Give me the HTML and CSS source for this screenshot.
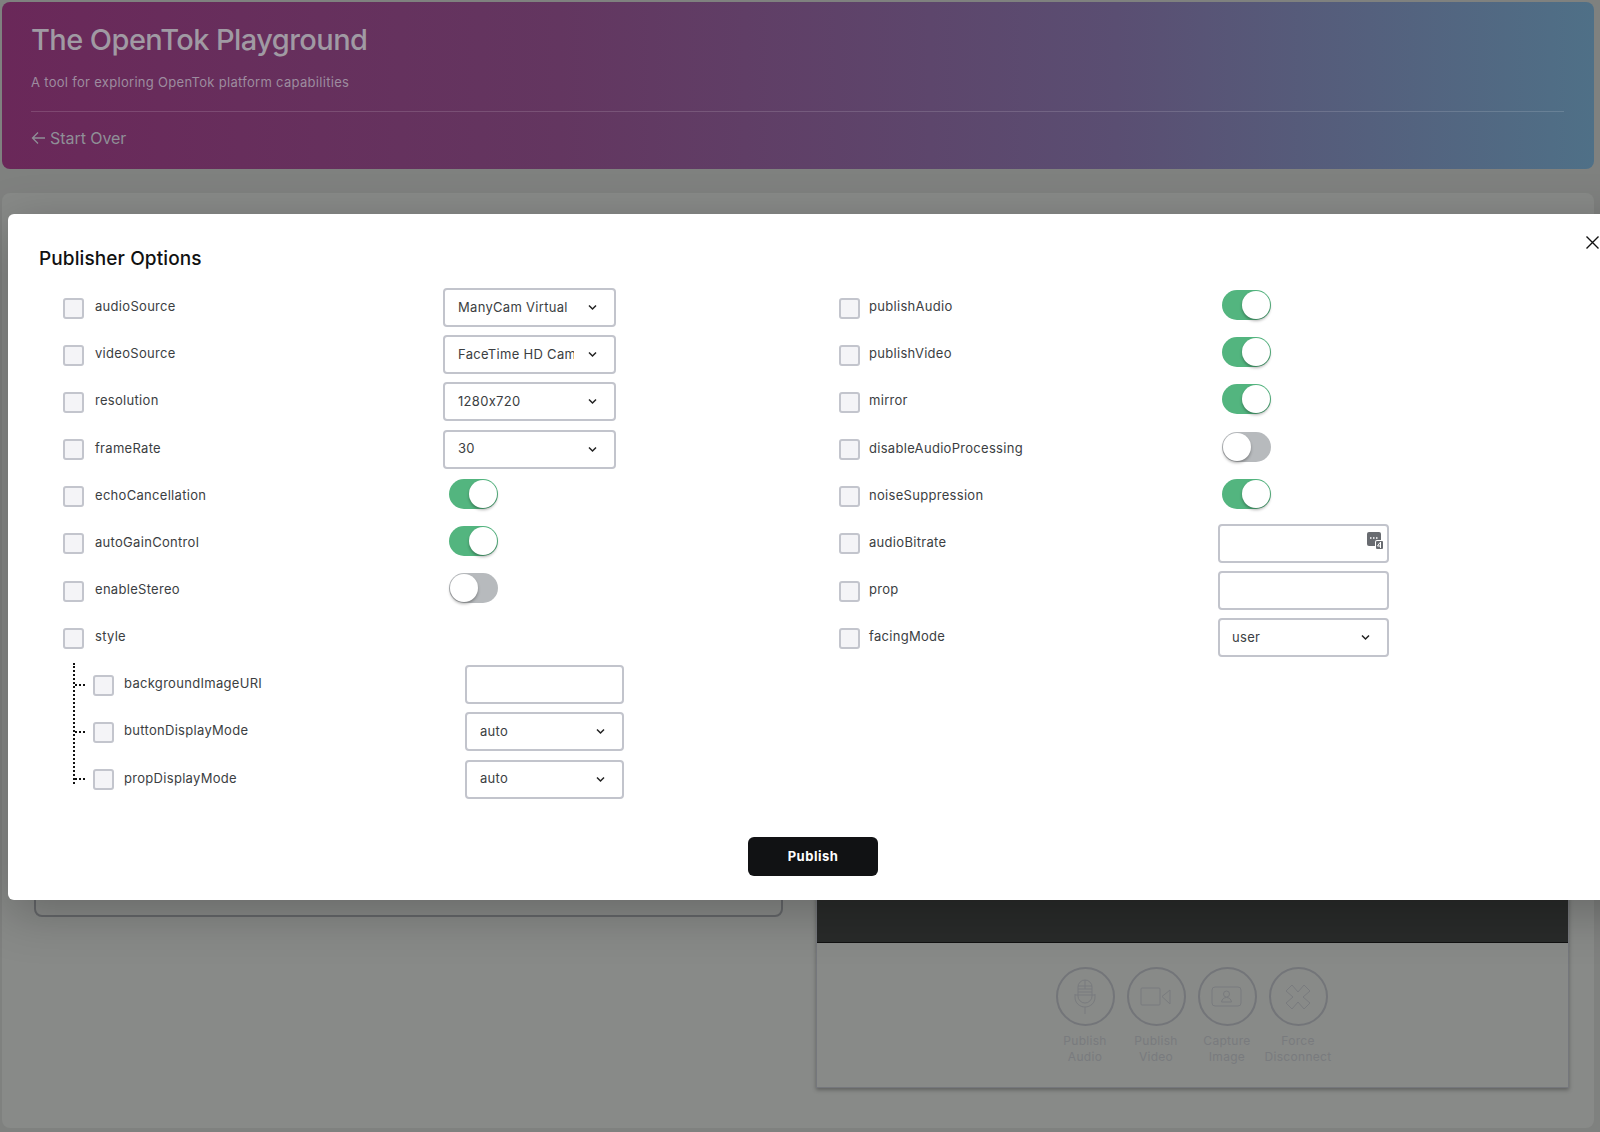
FILE: index.html
```html
<!DOCTYPE html>
<html lang="en">
<head>
  <meta charset="UTF-8" />
  <meta name="viewport" content="width=device-width, initial-scale=1.0" />
  <title>The OpenTok Playground</title>
  <link rel="stylesheet" href="styles.css">
</head>
<body>
  <header class="site-header">
    <h1>The OpenTok Playground</h1>
    <p>A tool for exploring OpenTok platform capabilities</p>
    <hr />
    <a class="start-over" href="#">
      <svg width="15" height="14" viewBox="0 0 15 14" fill="none" stroke="currentColor" stroke-width="1.3"><path d="M14 7H1.5M7 1.5 1.5 7 7 12.5" /></svg>
      Start Over
    </a>
  </header>

  <main class="card">
    <div class="session-box"></div>
    <div class="video-panel">
      <div class="video-feed"></div>
      <div class="video-controls">
        <div class="control">
          <span class="control-icon">
            <svg width="34" height="36" viewBox="0 0 34 36" fill="none" stroke="currentColor" stroke-width="1">
              <rect x="10" y="1" width="14" height="23" rx="7" />
              <path d="M10 7h14M10 10h14M10 13h14M10 16h14M17 1v9" />
              <path d="M7 15v3c0 6 4.500 10 10 10s10-4 10-10v-3M7 16h3M24 16h3M17 28v7" />
            </svg>
          </span>
          <span>Publish Audio</span>
        </div>
        <div class="control">
          <span class="control-icon">
            <svg width="32" height="20" viewBox="0 0 32 20" fill="none" stroke="currentColor" stroke-width="1">
              <rect x="1" y="1" width="19" height="17" rx="1" />
              <path d="M22 9.500 30 3v14z" />
            </svg>
          </span>
          <span>Publish Video</span>
        </div>
        <div class="control">
          <span class="control-icon">
            <svg width="32" height="22" viewBox="0 0 32 22" fill="none" stroke="currentColor" stroke-width="1">
              <rect x="1" y="1" width="29" height="19" rx="3" />
              <circle cx="15.500" cy="8" r="3" />
              <path d="M10.500 16c.5-3 2.500-4.500 5-4.500s4.500 1.500 5 4.500z" />
            </svg>
          </span>
          <span>Capture Image</span>
        </div>
        <div class="control">
          <span class="control-icon">
            <svg width="26" height="26" viewBox="0 0 26 26" fill="none" stroke="currentColor" stroke-width="1">
              <path d="M7 1 13 8 19 1 25 7 18 13 25 19 19 25 13 18 7 25 1 19 8 13 1 7z" />
            </svg>
          </span>
          <span>Force Disconnect</span>
        </div>
      </div>
    </div>
  </main>

  <section class="modal">
    <button class="modal-close" aria-label="Close">
      <svg width="13" height="13" viewBox="0 0 13 13" fill="none" stroke="#111" stroke-width="1.4"><path d="M.5.5l12 12M12.500.5l-12 12" /></svg>
    </button>
    <h2>Publisher Options</h2>

    <div class="options">
      <div class="option-col col-left">
        <div class="row">
          <input type="checkbox" class="check" />
          <label>audioSource</label>
          <select class="select"><option>ManyCam Virtual</option></select>
        </div>
        <div class="row">
          <input type="checkbox" class="check" />
          <label>videoSource</label>
          <select class="select"><option>FaceTime HD Camera</option></select>
        </div>
        <div class="row">
          <input type="checkbox" class="check" />
          <label>resolution</label>
          <select class="select"><option>1280x720</option></select>
        </div>
        <div class="row">
          <input type="checkbox" class="check" />
          <label>frameRate</label>
          <select class="select"><option>30</option></select>
        </div>
        <div class="row">
          <input type="checkbox" class="check" />
          <label>echoCancellation</label>
          <span class="toggle on"></span>
        </div>
        <div class="row">
          <input type="checkbox" class="check" />
          <label>autoGainControl</label>
          <span class="toggle on"></span>
        </div>
        <div class="row">
          <input type="checkbox" class="check" />
          <label>enableStereo</label>
          <span class="toggle"></span>
        </div>
        <div class="row">
          <input type="checkbox" class="check" />
          <label>style</label>
        </div>
        <div class="sub-group">
          <div class="tree-line"></div>
          <div class="sub-rows">
            <div class="row sub-row">
              <span class="tree-dash"></span>
              <input type="checkbox" class="check" />
              <label>backgroundImageURI</label>
              <input type="text" class="text-input" />
            </div>
            <div class="row sub-row">
              <span class="tree-dash"></span>
              <input type="checkbox" class="check" />
              <label>buttonDisplayMode</label>
              <select class="select"><option>auto</option></select>
            </div>
            <div class="row sub-row">
              <span class="tree-dash"></span>
              <input type="checkbox" class="check" />
              <label>propDisplayMode</label>
              <select class="select"><option>auto</option></select>
            </div>
          </div>
        </div>
      </div>

      <div class="option-col col-right">
        <div class="row">
          <input type="checkbox" class="check" />
          <label>publishAudio</label>
          <span class="toggle on"></span>
        </div>
        <div class="row">
          <input type="checkbox" class="check" />
          <label>publishVideo</label>
          <span class="toggle on"></span>
        </div>
        <div class="row">
          <input type="checkbox" class="check" />
          <label>mirror</label>
          <span class="toggle on"></span>
        </div>
        <div class="row">
          <input type="checkbox" class="check" />
          <label>disableAudioProcessing</label>
          <span class="toggle"></span>
        </div>
        <div class="row">
          <input type="checkbox" class="check" />
          <label>noiseSuppression</label>
          <span class="toggle on"></span>
        </div>
        <div class="row">
          <input type="checkbox" class="check" />
          <label>audioBitrate</label>
          <span class="input-wrap">
            <input type="text" class="text-input" />
            <svg class="input-badge" width="17" height="19" viewBox="0 0 17 19">
              <rect x="0" y="1" width="14" height="14" rx="2" fill="#686b70" />
              <path d="M3 7h1.500M6 7h1.500M9 7h1.500" stroke="#fff" stroke-width="1.600" />
              <rect x="8" y="9" width="9" height="10" rx="2" fill="#fff" />
              <rect x="9" y="10" width="7" height="8" rx="1" fill="#686b70" />
              <path d="M13.500 11v6M13.500 15H10.500l2.500-3.500" stroke="#fff" stroke-width="1" fill="none" />
            </svg>
          </span>
        </div>
        <div class="row">
          <input type="checkbox" class="check" />
          <label>prop</label>
          <input type="text" class="text-input" />
        </div>
        <div class="row">
          <input type="checkbox" class="check" />
          <label>facingMode</label>
          <select class="select"><option>user</option></select>
        </div>
      </div>
    </div>

    <div class="modal-footer">
      <button class="publish-btn">Publish</button>
    </div>
  </section>
</body>
</html>
```

FILE: styles.css
```css
/* page colours are the dimmed ones, as seen behind the modal backdrop */
body {
  margin: 0;
  padding: 2px 6px 4px 2px;
  height: 1132px;
  box-sizing: border-box;
  overflow: hidden;
  position: relative;
  background: #7f817f;
  font-family: Inter, "Liberation Sans", sans-serif;
}

.site-header {
  height: 167px;
  box-sizing: border-box;
  padding: 20px 30px 0 29px;
  border-radius: 8px;
  background: linear-gradient(90deg, #6a2859 0%, #633660 35%, #5a4e72 70%, #4f7087 100%);
  color: #a09aa3;
}
.site-header h1 {
  margin: 0;
  font-size: 29px;
  line-height: 36px;
  font-weight: 500;
  letter-spacing: -0.57px;
}
.site-header p {
  margin: 15px 0 0;
  font-size: 13px;
  line-height: 18px;
  letter-spacing: 0.3px;
  color: #9d8c9f;
}
.site-header hr {
  margin: 20px 0 0;
  border: 0;
  height: 1px;
  background: rgba(255, 255, 255, 0.14);
}
.start-over {
  display: flex;
  align-items: center;
  gap: 4px;
  margin-top: 16px;
  font-size: 16px;
  line-height: 20px;
  letter-spacing: -0.05px;
  color: #8f8f97;
  text-decoration: none;
}

.card {
  display: flex;
  justify-content: space-between;
  align-items: flex-start;
  height: 935px;
  margin-top: 24px;
  box-sizing: border-box;
  padding: 32px 25px 0 32px;
  border-radius: 8px;
  background: #888a88;
}
.session-box {
  width: 749px;
  height: 692px;
  box-sizing: border-box;
  border: 2px solid #65676a;
  border-radius: 8px;
}
.video-panel {
  width: 753px;
  border: 1px solid #75777c;
  border-top: 0;
  box-shadow: 0 2px 4px rgba(0, 0, 0, 0.3);
  box-sizing: border-box;
}
.video-feed {
  height: 717px;
  background: #292b2a;
  border-bottom: 1px solid #111;
}
.video-controls {
  height: 144px;
  box-sizing: border-box;
  padding: 24px 2px 0 0;
  display: flex;
  justify-content: center;
  gap: 12px;
  color: #737579;
}
.control {
  width: 59px;
  display: flex;
  flex-direction: column;
  align-items: center;
  gap: 7px;
  font-size: 12px;
  line-height: 16px;
  letter-spacing: 0.3px;
  text-align: center;
  color: #797b7e;
}
.control-icon {
  width: 59px;
  height: 59px;
  box-sizing: border-box;
  border: 2px solid #737579;
  border-radius: 50%;
  display: flex;
  align-items: center;
  justify-content: center;
  flex: none;
}

/* the modal runs past the right edge of the window */
.modal {
  position: absolute;
  left: 8px;
  top: 214px;
  width: 1640px;
  height: 686px;
  box-sizing: border-box;
  padding: 31px 0 0 31px;
  background: #fff;
  border-radius: 6px;
  box-shadow: 0 12px 50px rgba(0, 0, 0, 0.25);
}
.modal h2 {
  margin: 0;
  font-size: 19px;
  line-height: 28px;
  font-weight: 500;
  letter-spacing: 0.1px;
  color: #111;
}
.modal-close {
  position: absolute;
  left: 1578px;
  top: 22px;
  padding: 0;
  border: 0;
  background: none;
  line-height: 0;
}

.options {
  display: flex;
  margin-top: 11px;
  padding-left: 24px;
}
.option-col {
  width: 776px;
  flex: none;
}

.row {
  display: flex;
  align-items: center;
  height: 47.17px;
}
.row label {
  font-size: 13px;
  line-height: 18px;
  letter-spacing: 0.3px;
  color: #3b3e42;
  margin-top: -3px;
}
.check {
  appearance: none;
  flex: none;
  width: 21px;
  height: 21px;
  margin: 1px 10px 0 0;
  box-sizing: border-box;
  background: #f4f4f7;
  border: 2px solid #c3c5cd;
  border-radius: 3px;
}
.col-left > .row > .check { margin-right: 11px; }
.col-right > .row > .check { margin-right: 9px; }
.select, .text-input {
  margin-left: auto;
  box-sizing: border-box;
  height: 39px;
  background-color: #fff;
  border: 2px solid #c2c4cc;
  border-radius: 4px;
}
.select {
  appearance: none;
  padding: 0 40px 2px 13px;
  font-family: inherit;
  font-size: 13px;
  letter-spacing: 0.3px;
  color: #3b3e42;
  background-image: url("data:image/svg+xml,%3Csvg xmlns='http://www.w3.org/2000/svg' width='9' height='7'%3E%3Cpath d='M1 1.500l3.500 3.500 3.500-3.500' fill='none' stroke='%23222' stroke-width='1.500'/%3E%3C/svg%3E");
  background-repeat: no-repeat;
  background-position: right 17px center;
}
.option-col > .row > .select,
.option-col > .row > .text-input,
.input-wrap {
  width: 173px;
  margin-left: auto;
  flex: none;
}
.col-right > .row > .select,
.col-right > .row > .text-input,
.col-right .input-wrap { width: 171px; }
.col-right .select { padding-left: 12px; }
.col-left > .row { padding-right: 223px; }
.col-right > .row { padding-right: 226px; }
.input-wrap {
  display: block;
  position: relative;
  height: 39px;
}
.input-wrap .text-input { width: 100%; }
.input-badge {
  position: absolute;
  right: 5px;
  top: 7px;
}

.toggle {
  position: relative;
  flex: none;
  width: 49px;
  height: 30px;
  margin: -5px 0 0 auto;
  border-radius: 15px;
  background: #b7babd;
}
.col-left > .row > .toggle { margin-right: 118px; }
.col-right > .row > .toggle { margin-right: 118px; }
.toggle::after {
  content: "";
  position: absolute;
  left: 1px;
  top: 1px;
  width: 28px;
  height: 28px;
  border-radius: 50%;
  background: #fff;
  box-shadow: 0 2px 3px rgba(0, 0, 0, 0.3);
}
.toggle.on { background: #53b57f; }
.toggle.on::after { left: 20px; }

.sub-group { display: flex; }
.tree-line {
  flex: none;
  margin: 2px 0 19px 10px;
  border-left: 2px dotted #111;
}
.sub-rows { flex: 1; }
.sub-row { padding-right: 215px; }
.sub-row .select, .sub-row .text-input { width: 159px; flex: none; }
.tree-dash {
  flex: none;
  width: 10px;
  margin-right: 8px;
  border-top: 2px dotted #111;
}
.sub-row .select { background-position: right 17px center; }

.modal-footer {
  position: absolute;
  left: 740px;
  top: 623px;
}
.publish-btn {
  width: 130px;
  height: 39px;
  padding: 0 0 2px;
  border: 0;
  border-radius: 6px;
  background: #111214;
  color: #fff;
  font-family: inherit;
  font-size: 13px;
  font-weight: 700;
  letter-spacing: 0.5px;
}
```
